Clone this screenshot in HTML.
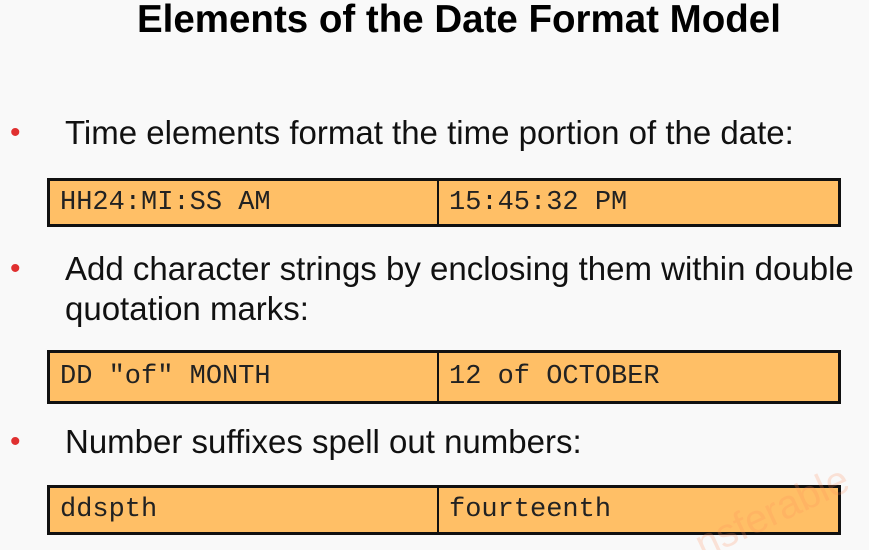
<html><head><style>
html,body{margin:0;width:869px;height:550px;overflow:hidden}
body{background:#f9f9f9;font-family:"Liberation Sans",sans-serif;position:relative}
.t{position:absolute;left:137px;top:-2px;font-size:38.5px;font-weight:bold;color:#000;white-space:nowrap}
.b{position:absolute;left:10px;color:#e03030;font-size:30px}
.p{position:absolute;left:65px;font-size:33px;color:#111;line-height:40px;white-space:nowrap}
.tb{position:absolute;left:47px;width:788px;background:#ffbf66;border:3px solid #111;display:flex}
.tb div{font-family:"Liberation Mono",monospace;font-size:27px;color:#222;padding-left:10px;display:flex;align-items:center}
.c1{width:377px;border-right:2px solid #111}
.wm{position:absolute;left:690px;top:490px;font-size:40px;color:rgba(255,140,90,0.22);transform:rotate(-25deg)}
</style></head><body>
<div class="t">Elements of the Date Format Model</div>
<div class="b" style="top:116px">•</div>
<div class="p" style="top:113px">Time elements format the time portion of the date:</div>
<div class="tb" style="top:178px;height:43px"><div class="c1">HH24:MI:SS AM</div><div>15:45:32 PM</div></div>
<div class="b" style="top:252px">•</div>
<div class="p" style="top:249px">Add character strings by enclosing them within double<br>quotation marks:</div>
<div class="tb" style="top:350px;height:48px"><div class="c1">DD "of" MONTH</div><div>12 of OCTOBER</div></div>
<div class="b" style="top:425px">•</div>
<div class="p" style="top:422px">Number suffixes spell out numbers:</div>
<div class="tb" style="top:485px;height:44px"><div class="c1">ddspth</div><div>fourteenth</div></div>
<div class="wm">nsferable</div>
</body></html>
